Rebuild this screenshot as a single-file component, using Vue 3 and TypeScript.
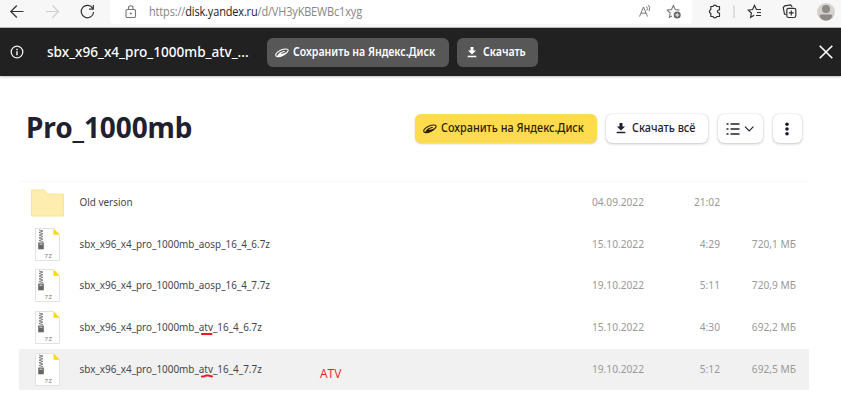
<script setup lang="ts">
interface Entry {
  before: string
  mark?: string
  after?: string
  date: string
  time: string
  size: string
  kind: 'folder' | 'archive'
  active?: boolean
}

const entries: Entry[] = [
  { before: 'Old version', date: '04.09.2022', time: '21:02', size: '', kind: 'folder' },
  { before: 'sbx_x96_x4_pro_1000mb_aosp_16_4_6.7z', date: '15.10.2022', time: '4:29', size: '720,1 МБ', kind: 'archive' },
  { before: 'sbx_x96_x4_pro_1000mb_aosp_16_4_7.7z', date: '19.10.2022', time: '5:11', size: '720,9 МБ', kind: 'archive' },
  { before: 'sbx_x96_x4_pro_1000mb_', mark: 'atv', after: '_16_4_6.7z', date: '15.10.2022', time: '4:30', size: '692,2 МБ', kind: 'archive' },
  { before: 'sbx_x96_x4_pro_1000mb_', mark: 'atv', after: '_16_4_7.7z', date: '19.10.2022', time: '5:12', size: '692,5 МБ', kind: 'archive', active: true },
]
</script>

<template>
  <div class="page">
    <header class="browser">
      <svg class="nav" width="110" height="27" viewBox="0 0 110 27" fill="none" stroke-width="1.2">
        <path d="M23.500 11.500H11M16.800 5.500L10.800 11.500l6 6" stroke="#333" />
        <path d="M46 11.500h12.500M52.500 5.500l6 6-6 6" stroke="#cfcfcf" />
        <path d="M92.800 8.500A6.200 6.200 0 1 0 93.600 12M93.300 5v4.200h-4.200" stroke="#333" />
      </svg>
      <div class="address">
        <svg class="lock" width="12" height="14" viewBox="0 0 12 14" fill="none" stroke="#777" stroke-width="1.100">
          <rect x="1" y="4.500" width="9.500" height="8" rx="1.200" /><path d="M3.500 4.500V3a2.250 2.250 0 0 1 4.500 0v1.500" /><circle cx="5.750" cy="8.500" r=".5" fill="#777" />
        </svg>
        <span class="url">https://<b>disk.yandex.ru</b>/d/VH3yKBEWBc1xyg</span>
        <svg class="addr-icons" width="46" height="20" viewBox="636 2 46 20" fill="none" stroke="#777" stroke-width="1">
          <path d="M639.500 16.500l4-9.500 4 9.500M641 13.200h5M646.500 6.500q1.500 1.500.5 4M648.500 5q2.300 2.500.5 6" />
          <path d="M679.500 10.100l-4.200-.6-1.900-4-1.900 4-4.300.6 3 2.900-.8 4.200 2.600-1.300" stroke-width="1.100" />
          <circle cx="677.200" cy="15" r="3.500" fill="#666" stroke="none" /><path d="M675.200 15h4M677.200 13v4" stroke="#fff" stroke-width=".9" />
        </svg>
      </div>
      <svg class="tools" width="149" height="27" viewBox="692 0 149 27" fill="none" stroke="#333" stroke-width="1.200">
        <path d="M710.800 6.500h2.200a2 2 0 0 1 3.800 0h2.700v3.300q-2.200.2-2.200 1.700t2.200 1.700v3.300h-2.700a2 2 0 0 1-3.800 0h-2.200v-3.100a2 2 0 0 1 0-3.800z" stroke-linejoin="round" />
        <path d="M734 5.500v12.500" stroke="#ccc" />
        <path d="M760 9.500h-3.600l-1.900-4-1.900 4-4.300.6 3.100 2.900-.8 4.300 3.600-2M757 9.500h4M757 12.500h4M756 15.500h5" />
        <path d="M786 14.500l-1.500-.5-1.300-6.500 1.500-1.700 6-.8 1.500 2" /><rect x="786.800" y="8.300" width="9" height="9.200" rx="1.800" /><path d="M791.300 10.400v5M788.800 12.900h5" />
        <circle cx="826" cy="12" r="9" fill="#d4d1ce" stroke="none" /><circle cx="826" cy="9" r="4" fill="#8c8986" stroke="none" /><path d="M819.500 16q0-1.500 2-1.500h9q2 0 2 1.500-2 4.500-6.500 4.500t-6.500-4.500z" fill="#8c8986" stroke="none" />
      </svg>
    </header>

    <section class="banner">
      <svg class="info" width="14" height="14" viewBox="0 0 14 14" fill="none" stroke="#eee"><circle cx="7" cy="7" r="5.800" stroke-width="1.300" /><path d="M7 6.200v4M7 3.700v1.500" stroke-width="1.500" /></svg>
      <span class="banner-title">sbx_x96_x4_pro_1000mb_atv_...</span>
      <button class="dark save"><svg class="disk" width="14" height="11" viewBox="0 0 14 11"><path fill="none" stroke="currentColor" stroke-width="1.100" d="M2 9.500C-.8 8.300 1.500 5 5.500 3.200 9 1.700 13.700 1.200 13.100 3.700 12.200 7 4.500 10.300 2 9.500z" /><path fill="currentColor" d="M2 9.500C3.500 6.300 6.500 3.900 10.300 4.100 9.800 5.200 7 5.200 5.600 6.700c2.500.2 4-.6 5.800-1.600C10 8.500 5 10.300 2 9.500z" /></svg><span>Сохранить на Яндекс.Диск</span></button>
      <button class="dark down"><svg width="10" height="11" viewBox="0 0 10 11" fill="currentColor"><path d="M3.500 0h3v3.500h2.600L5 7.600.9 3.500h2.600zM.7 8.800h8.600v1.500H.7z" /></svg><span>Скачать</span></button>
      <svg class="close" width="14" height="14" viewBox="0 0 14 14" stroke="#fff" stroke-width="1.600"><path d="M.7.7l12.600 12.600M13.300.7L.7 13.300" /></svg>
    </section>

    <main>
      <div class="heading">
        <h1>Pro_1000mb</h1>
        <div class="actions">
          <button class="yellow"><svg class="disk" width="14" height="11" viewBox="0 0 14 11"><path fill="none" stroke="currentColor" stroke-width="1.100" d="M2 9.500C-.8 8.300 1.500 5 5.500 3.200 9 1.700 13.700 1.200 13.100 3.700 12.200 7 4.500 10.300 2 9.500z" /><path fill="currentColor" d="M2 9.500C3.500 6.300 6.500 3.900 10.300 4.100 9.800 5.200 7 5.200 5.600 6.700c2.500.2 4-.6 5.800-1.600C10 8.500 5 10.300 2 9.500z" /></svg><span>Сохранить на Яндекс.Диск</span></button>
          <button class="white all"><svg width="10" height="11" viewBox="0 0 10 11" fill="currentColor"><path d="M3.500 0h3v3.500h2.600L5 7.600.9 3.500h2.600zM.7 8.800h8.600v1.500H.7z" /></svg><span>Скачать всё</span></button>
          <button class="white view"><svg width="29" height="14" viewBox="0 0 29 14" fill="none" stroke="#25202c"><path d="M.5 2h2M.5 7h2M.5 12h2M4.500 2h9M4.500 7h9M4.500 12h9" stroke-width="1.500" /><path d="M19 4.700l4.200 4.200 4.200-4.200" stroke-width="1.200" /></svg></button>
          <button class="white more"><svg width="4" height="14" viewBox="0 0 4 14" fill="#201b28"><circle cx="2" cy="2.300" r="1.800" /><circle cx="2" cy="7" r="1.800" /><circle cx="2" cy="11.700" r="1.800" /></svg></button>
        </div>
      </div>

      <div class="list">
        <div v-for="(e, i) in entries" :key="i" class="row" :class="{ active: e.active }">
          <div class="icon">
            <svg v-if="e.kind === 'folder'" width="33" height="28" viewBox="0 0 33 28"><path d="M.5 1h12.800l3 4h16.200v22H.5z" fill="#fdedae" stroke="#fae48c" /></svg>
            <svg v-else class="archive" width="26" height="34" viewBox="0 0 26 34">
              <path d="M.5.500h18L24.500 7v25.500H.5z" fill="#fff" stroke="#e2e2e2" /><path d="M18.500.500l6.200 6.200h-6.200z" fill="#ffd900" />
              <path d="M4 2l4 1-4 1.500 4 1.200-4 1.500 4 1.200-4 1.500 4 1.200-4 1.500 4 1" fill="none" stroke="#777" stroke-width=".9" />
              <rect x="3.200" y="14.500" width="5.600" height="6.800" fill="#666" /><path d="M4.500 16.200h3" stroke="#ddd" />
              <text x="9.500" y="30" class="ext">7Z</text>
            </svg>
          </div>
          <span class="name">{{ e.before }}<span v-if="e.mark" class="mark">{{ e.mark }}<svg width="14" height="4" viewBox="0 0 14 4"><path :d="e.active ? 'M1 2.600L4 2.300 6 1.500 8.500 1.500 13 2.400' : 'M1 2h11.500'" fill="none" stroke="#f01820" stroke-width="2" stroke-linecap="round" /></svg></span>{{ e.after }}</span>
          <span class="date">{{ e.date }}</span>
          <span class="time">{{ e.time }}</span>
          <span class="size">{{ e.size }}</span>
          <span v-if="e.active" class="note">ATV</span>
        </div>
      </div>
    </main>
  </div>
</template>

<style>
body { margin: 0; overflow: hidden; }
</style>

<style scoped>
* { box-sizing: border-box; }
.page { width: 841px; height: 406px; background: #fff; font-family: "Noto Sans", sans-serif; display: flex; flex-direction: column; }
svg { display: block; flex: none; }
.browser { height: 28px; background: #f7f7f7; border-bottom: 1px solid #bbb; display: flex; flex: none; }
.address { width: 582px; height: 24px; background: #fff; border-radius: 0 0 4px 4px; display: flex; align-items: center; padding-left: 15px; }
.lock { margin-top: -1px; }
.url { font: 12px "Open Sans", sans-serif; color: #858585; margin: -1px 0 0 12px; letter-spacing: -.15px; transform: scaleX(.912); transform-origin: left; white-space: nowrap; width: 214px; }
.url b { font-weight: 400; color: #222; }
.addr-icons { margin-left: 273px; }
.banner { height: 48px; flex: none; background: #212121; box-shadow: 0 1px 2px #0004; display: flex; align-items: center; padding-left: 10px; color: #fff; }
.banner-title { font-size: 14px; font-weight: 500; margin: -2px 0 0 23px; width: 220px; white-space: nowrap; transform: scaleX(.972); transform-origin: left; }
button { font: 500 12px "Noto Sans", sans-serif; border: 0; margin: 0; display: flex; align-items: center; white-space: nowrap; }
button span { margin-top: -2px; transform: scaleX(.905); transform-origin: left; }
.dark { height: 29px; border-radius: 6px; color: #fff; background: #575757; padding: 0 0 0 8px; font-weight: 600; }
.dark span { transform: scaleX(.88); }
.save { width: 182px; }
.save span, .yellow span { margin-left: 4px; }
.down { width: 81px; margin-left: 8px; padding-left: 10px; }
.down span { margin-left: 6px; }
.close { margin-left: 281px; }
main { flex: 1; padding-left: 19px; }
.heading { height: 104.500px; display: flex; align-items: flex-start; padding: 38px 0 0 8px; }
h1 { margin: -6px 0 0 -1px; width: 389px; font-size: 28px; line-height: 38px; font-weight: 700; letter-spacing: -.1px; color: #21202f; }
.actions { display: flex; }
.yellow { width: 182px; height: 29px; border-radius: 6px; color: #2b1c0a; background: #ffdb4d; padding: 0 0 0 8px; box-shadow: 0 1px 2px #0003; }
.white { height: 29px; border-radius: 6px; color: #21202f; background: #fff; padding: 0; box-shadow: 0 0 1px #0004, 0 1px 3px #0003; justify-content: center; }
.all { width: 102px; margin-left: 9px; justify-content: flex-start; padding-left: 10px; }
.all span { margin-left: 6px; }
.view { width: 45px; margin-left: 10px; }
.more { width: 29px; margin-left: 10px; padding-right: 1px; }
.list { width: 790px; border-top: 1px solid #f8f8f8; }
.row { position: relative; height: 41.750px; display: grid; grid-template-columns: 60px 480px 86px 75px 76px; align-items: center; font-size: 11.500px; color: #99999b; white-space: nowrap; }
.active { background: #f1f1f1; height: 41.500px; }
.icon { padding: 1px 0 0 12px; }
.archive { margin-left: 4px; }
.ext { font: 6px "Noto Sans", sans-serif; fill: #777; letter-spacing: .5px; }
.name { color: #45454a; transform: translateX(.5px) scaleX(.861); transform-origin: left; }
.name, .date, .time, .size { margin-top: -2px; }
.date, .time, .size { text-align: right; transform: scaleX(.885); transform-origin: right; }
.date { margin-right: 1px; }
.mark { position: relative; }
.mark svg { position: absolute; left: 2px; bottom: -2px; }
.note { position: absolute; left: 301px; top: 16px; font: 12px/18px "Open Sans", sans-serif; color: #ed1c24; }
</style>
